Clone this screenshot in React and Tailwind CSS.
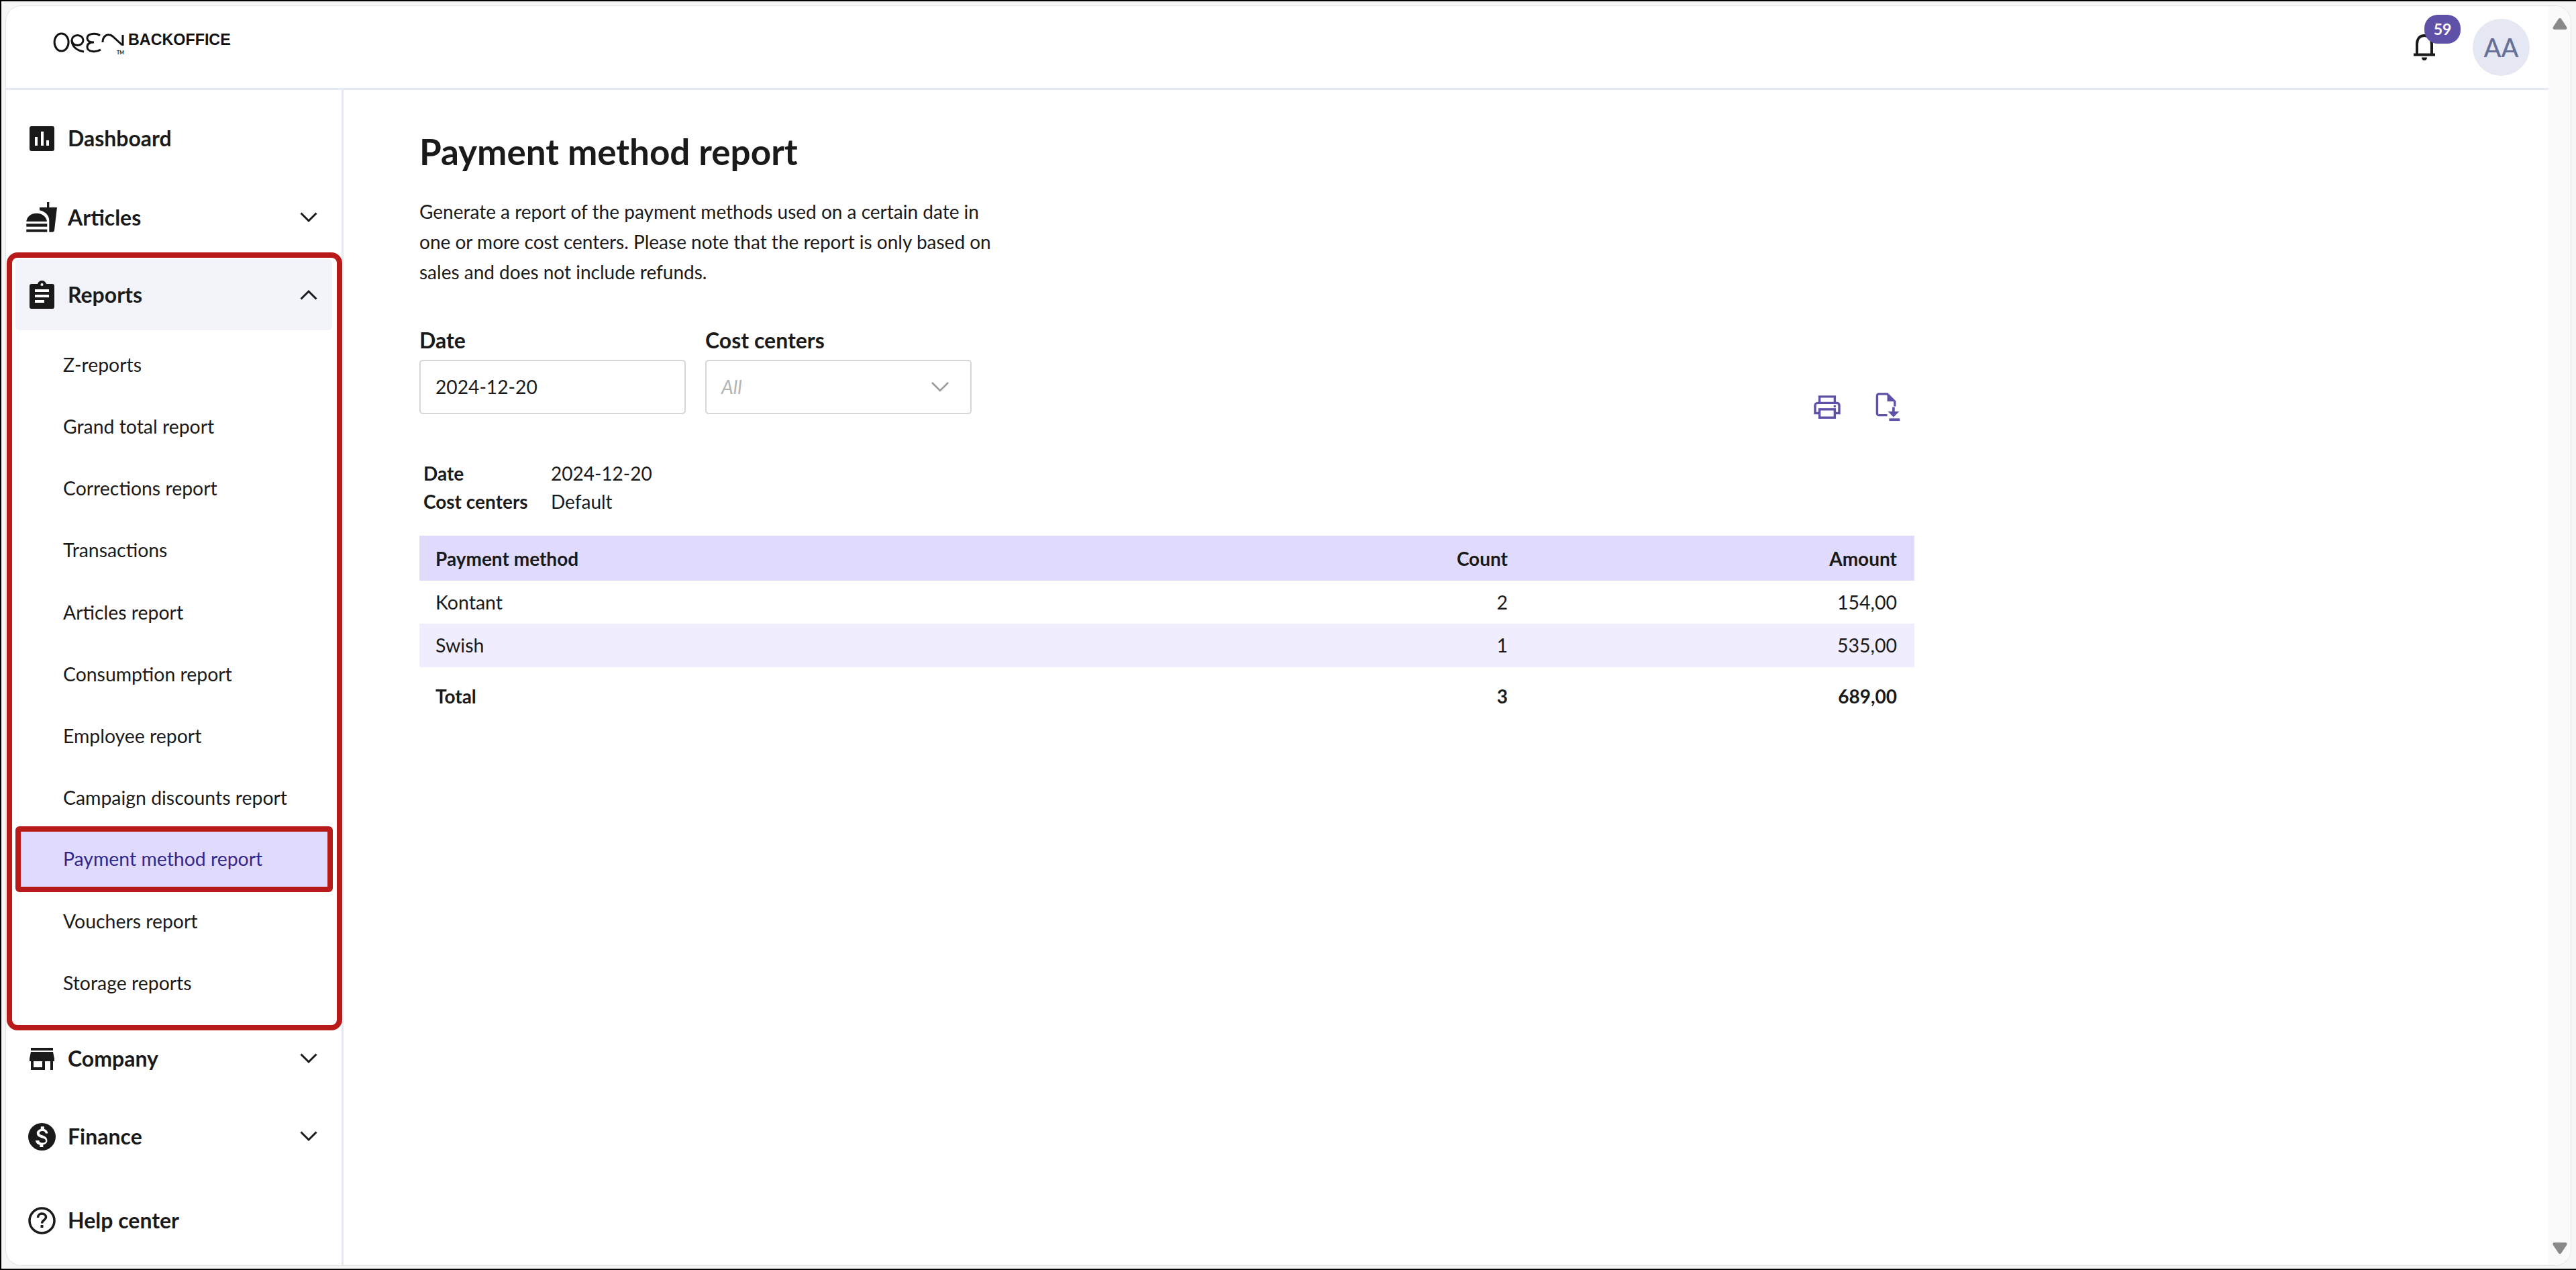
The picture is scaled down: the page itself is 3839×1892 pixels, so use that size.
import React from "react";

const Chev = ({ up }) => (
  <svg width="26" height="16" viewBox="0 0 26 16" fill="none" stroke="#1a1a1a" strokeWidth="3">
    <path d={up ? "M1.500 14.500 13 3l11.500 11.500" : "M1.500 1.500 13 13 24.500 1.500"} />
  </svg>
);

const IconDash = () => (
  <svg width="37" height="37" viewBox="0 0 37 37">
    <rect width="37" height="37" rx="3" fill="#1a1a1a" />
    <rect x="8" y="16" width="4" height="13" fill="#fff" />
    <rect x="17" y="8" width="4" height="21" fill="#fff" />
    <rect x="25" y="21" width="4" height="8" fill="#fff" />
  </svg>
);

const IconArticles = () => (
  <svg width="46" height="46" viewBox="0 0 46 46" fill="#1a1a1a">
    <path d="M31 0h3.300v8H46l-4 34c-.2 1.800-1.500 2.700-3 2.700h-4.700V27c0-7-6-13-14.300-14.700V8h11z" />
    <path d="M.3 29C1 21 8 16.700 15.500 16.700S30 21 31 29z" />
    <rect x=".3" y="32.300" width="31" height="4.400" />
    <rect x=".3" y="40.700" width="31" height="4" />
  </svg>
);

const IconReports = () => (
  <svg width="37" height="42" viewBox="0 0 37 42">
    <path fill="#1a1a1a" d="M3 5h9c1-3 3-5 6.500-5S24 2 25 5h9c2 0 3 1 3 3v31c0 2-1 3-3 3H3c-2 0-3-1-3-3V8c0-2 1-3 3-3z" />
    <circle cx="18.500" cy="6" r="2" fill="#fff" />
    <rect x="8" y="13" width="21" height="4" fill="#fff" />
    <rect x="8" y="21" width="21" height="4" fill="#fff" />
    <rect x="8" y="29" width="14" height="4" fill="#fff" />
  </svg>
);

const IconCompany = () => (
  <svg width="37" height="33" viewBox="0 0 37 33" fill="#1a1a1a">
    <rect x="2" y="0" width="33" height="4" />
    <path d="M2 6h33l2 10v4h-2v13h-4V20h-8v13H2V20H0v-4zM6 20v9h13v-9z" fillRule="evenodd" />
  </svg>
);

const IconFinance = () => (
  <svg width="41" height="41" viewBox="0 0 24 24">
    <circle cx="12" cy="12" r="12" fill="#1a1a1a" />
    <path fill="#fff" d="M12.800 10.900c-2.300-.6-3-1.200-3-2.100 0-1.100 1-1.800 2.700-1.800 1.800 0 2.400.8 2.500 2.100h2.200c-.1-1.700-1.100-3.300-3.200-3.800V3h-3v2.200c-1.900.4-3.500 1.700-3.500 3.700 0 2.300 1.900 3.500 4.800 4.200 2.500.6 3 1.500 3 2.400 0 .7-.5 1.800-2.700 1.800-2.100 0-2.900-.9-3-2.100H6.400c.1 2.200 1.800 3.500 3.700 3.900V21h3v-2.100c1.900-.4 3.500-1.500 3.500-3.600 0-2.800-2.400-3.800-3.800-4.400z" />
  </svg>
);

const IconHelp = () => (
  <svg width="41" height="41" viewBox="0 0 41 41" fill="none">
    <circle cx="20.500" cy="20.500" r="18.500" stroke="#1a1a1a" strokeWidth="3.500" />
    <path d="M14.500 16c0-3.500 2.500-6 6-6s6 2.500 6 5.500c0 4-6 4.500-6 9" stroke="#1a1a1a" strokeWidth="3.500" />
    <rect x="18.500" y="27" width="4" height="4" fill="#1a1a1a" />
  </svg>
);

const IconBell = () => (
  <svg width="32" height="40" viewBox="0 0 32 40" fill="none">
    <path d="M5 31V16C5 8 9 3 16 3s11 5 11 13v15" stroke="#1a1a1a" strokeWidth="4" />
    <rect x="0" y="29.500" width="32" height="4" fill="#1a1a1a" />
    <path d="M12 35.500h8c0 3-1.500 4.500-4 4.500s-4-1.500-4-4.500z" fill="#1a1a1a" />
  </svg>
);

const IconPrint = () => (
  <svg width="40" height="36" viewBox="0 0 42 38" fill="none" stroke="#5f51a8" strokeWidth="3.600">
    <path d="M9 12V2h24v10" />
    <path d="M9 28H2V16c0-2.500 1.500-4 4-4h30c2.500 0 4 1.500 4 4v12h-7" />
    <rect x="9" y="22" width="24" height="13" />
    <circle cx="33" cy="17" r="2" fill="#5f51a8" stroke="none" />
  </svg>
);

const IconExport = () => (
  <svg width="37" height="43" viewBox="0 0 38 46" fill="none">
    <path d="M18 36H5c-2 0-3.200-1.200-3.200-3V5C1.800 3 3 2 5 2h13l12 12v8" stroke="#5f51a8" strokeWidth="3.600" />
    <path d="M18 2l12 12H18z" fill="#5f51a8" />
    <path d="M26 23h4v7h7l-9 9-9-9h7z" fill="#5f51a8" />
    <rect x="21" y="41" width="17" height="4" fill="#5f51a8" />
  </svg>
);

const Logo = () => (
  <svg width="108" height="34" viewBox="0 0 108 34" fill="none" stroke="#111" strokeWidth="3">
    <ellipse cx="13.600" cy="16" rx="10.500" ry="13" />
    <ellipse cx="37.500" cy="13" rx="8.500" ry="7.500" />
    <path d="M29 13c0 9 7 15 18 17" />
    <path d="M71 6C66 2 52 2 52 10c0 5 6 6 10 6-6 0-10 2-10 7 0 8 14 8 20 4" />
    <path d="M75 16c0-8 5-12 10-11 3 0 5 2 7 4l12 11" />
    <path d="M105 5v16" />
  </svg>
);

const NavTop = ({ icon, label, chev, up, pl = "pl-[30px]", mr = "mr-[36px]" }) => (
  <div className={`flex items-center h-full ${pl}`}>
    <div className="w-[46px] flex justify-center shrink-0">{icon}</div>
    <span className="text-[32px] font-bold text-[#1a1a1a] leading-none ml-[16px]">{label}</span>
    {chev && (
      <div className={`ml-auto flex ${mr}`}>
        <Chev up={up} />
      </div>
    )}
  </div>
);

const subs = [
  "Z-reports",
  "Grand total report",
  "Corrections report",
  "Transactions",
  "Articles report",
  "Consumption report",
  "Employee report",
  "Campaign discounts report",
];

const SubItem = ({ label }) => (
  <div className="h-[92.200px] flex items-center pl-[76px] text-[28.400px] text-[#1a1a1a]">{label}</div>
);

const Row = ({ className, a, b, c }) => (
  <div className={`flex items-center pl-[24px] pr-[26px] ${className}`}>
    <span className="flex-1">{a}</span>
    <span className="w-[400px] text-right">{b}</span>
    <span className="w-[580px] text-right">{c}</span>
  </div>
);

export default function App() {
  return (
    <div
      className="w-[3839px] h-[1892px] bg-[#f6f6f6] border-t-2 border-l-2 border-b-2 border-black pt-[6px] pl-[6px] pr-[7px] pb-[4px] overflow-hidden"
      style={{ fontFamily: "Lato, 'Open Sans', sans-serif" }}
    >
      <div className="w-full h-full bg-white rounded-[24px] border border-[#e2e2e2] flex overflow-hidden">
        <div className="flex-1 min-w-0 flex flex-col">
          <header className="h-[125px] shrink-0 border-b-[3px] border-[#e5e9f3] flex items-center">
            <div className="pl-[69px] flex items-start -mt-[12px]">
              <Logo />
              <div className="relative">
                <span className="ml-[5px] text-[23.300px] font-bold leading-none text-[#111] block pt-[1px]" style={{ fontFamily: "'Liberation Sans', sans-serif" }}>
                  BACKOFFICE
                </span>
                <span className="absolute left-[-12px] top-[28px] text-[7px] font-bold text-[#111] leading-none">TM</span>
              </div>
            </div>
            <div className="ml-auto flex items-center">
              <div className="relative mr-[56px]">
                <IconBell />
                <div className="absolute left-[16px] top-[-28px] w-[54px] h-[43px] rounded-[20px] bg-[#5f51a8] text-white text-[23px] font-bold flex items-center justify-center">
                  59
                </div>
              </div>
              <div className="w-[85px] h-[85px] rounded-full bg-[#e5e8f2] text-[#667099] text-[38px] font-medium flex items-center justify-center mr-[28px]">
                AA
              </div>
            </div>
          </header>
          <div className="flex-1 min-h-0 flex">
            <aside className="w-[503px] shrink-0 border-r-[3px] border-[#e5e9f3] flex flex-col pt-[23px]">
              <div className="h-[98px] shrink-0"><NavTop icon={<IconDash />} label="Dashboard" /></div>
              <div className="h-[96px] shrink-0 mt-[21px]"><NavTop icon={<IconArticles />} label="Articles" chev /></div>
              <div className="h-[1159px] shrink-0 mt-[4px] w-[500px] ml-[1px] border-[8px] border-[#b81a1a] rounded-[16px]">
                <div className="h-[106px] mt-[2px] bg-[#f2f4f9] rounded-[6px] ml-[5px] mr-[7px]">
                  <NavTop icon={<IconReports />} label="Reports" chev up pl="pl-[16px]" mr="mr-[22px]" />
                </div>
                <div className="pt-[5px]">
                  {subs.map((s) => (
                    <SubItem key={s} label={s} />
                  ))}
                  <div className="h-[98px] ml-[5px] mr-[6px] -mt-[4px] -mb-[2px] border-[8px] border-[#b81a1a] rounded-[6px] bg-[#e0dbfc] flex items-center pl-[63px] text-[28.400px] text-[#33288a] relative">
                    Payment method report
                  </div>
                  <SubItem label="Vouchers report" />
                  <SubItem label="Storage reports" />
                </div>
              </div>
              <div className="h-[84px] shrink-0"><NavTop icon={<IconCompany />} label="Company" chev /></div>
              <div className="h-[116px] shrink-0 mt-[16px]"><NavTop icon={<IconFinance />} label="Finance" chev /></div>
              <div className="h-[116px] shrink-0 mt-[9px]"><NavTop icon={<IconHelp />} label="Help center" /></div>
            </aside>
            <main className="flex-1 pl-[113px] pt-[57px] text-[#1a1a1a]">
              <h1 className="text-[53px] font-bold leading-[70px]">Payment method report</h1>
              <p className="mt-[32px] w-[880px] text-[28px] leading-[45px]">
                Generate a report of the payment methods used on a certain date in one or more cost centers. Please note that the report is only based on sales and does not include refunds.
              </p>
              <div className="w-[2228px] mt-[57px] flex items-end">
                <div>
                  <div className="text-[32px] font-bold leading-[44px]">Date</div>
                  <div className="mt-[7px] w-[397px] h-[81px] border-[2px] border-[#d6d6d6] rounded-[5px] flex items-center pl-[22px] text-[28.200px]">
                    2024-12-20
                  </div>
                </div>
                <div className="ml-[29px]">
                  <div className="text-[32px] font-bold leading-[44px]">Cost centers</div>
                  <div className="mt-[7px] w-[397px] h-[81px] border-[2px] border-[#d6d6d6] rounded-[5px] flex items-center pl-[22px] pr-[32px] text-[28.200px] italic text-[#b3b3b3]">
                    All
                    <svg className="ml-auto" width="26" height="15" viewBox="0 0 26 15" fill="none" stroke="#9a9a9a" strokeWidth="2.500">
                      <path d="M1 1l12 12L25 1" />
                    </svg>
                  </div>
                </div>
                <div className="ml-auto flex items-center gap-[52px] mr-[21px] -mb-[11px]">
                  <IconPrint />
                  <IconExport />
                </div>
              </div>
              <div className="mt-[67px] ml-[6px] grid grid-cols-[190px_auto] justify-start text-[28px] leading-[42px]">
                <span className="font-bold">Date</span>
                <span>2024-12-20</span>
                <span className="font-bold">Cost centers</span>
                <span>Default</span>
              </div>
              <div className="mt-[30px] w-[2228px] text-[28.500px]">
                <Row className="h-[67px] bg-[#e0dbfc] font-bold text-[28px]" a="Payment method" b="Count" c="Amount" />
                <Row className="h-[64px]" a="Kontant" b="2" c="154,00" />
                <Row className="h-[65px] bg-[#f0edfe]" a="Swish" b="1" c="535,00" />
                <Row className="h-[85px] font-bold text-[28px]" a="Total" b="3" c="689,00" />
              </div>
            </main>
          </div>
        </div>
        <div className="w-[33px] shrink-0 bg-[#fafafa] flex flex-col items-center justify-between pt-[18px] pb-[17px]">
          <svg width="22" height="17" viewBox="0 0 22 17" fill="#8a8a8a"><path d="M11 0c1 0 1.500.5 2 1l8 12c1 2 .5 4-2 4H3c-2.500 0-3-2-2-4L9 1c.5-.5 1-1 2-1z" /></svg>
          <svg width="22" height="17" viewBox="0 0 22 17" fill="#8a8a8a"><path d="M11 17c1 0 1.500-.5 2-1l8-12c1-2 .5-4-2-4H3C.500 0 0 2 1 4l8 12c.5.5 1 1 2 1z" /></svg>
        </div>
      </div>
    </div>
  );
}
